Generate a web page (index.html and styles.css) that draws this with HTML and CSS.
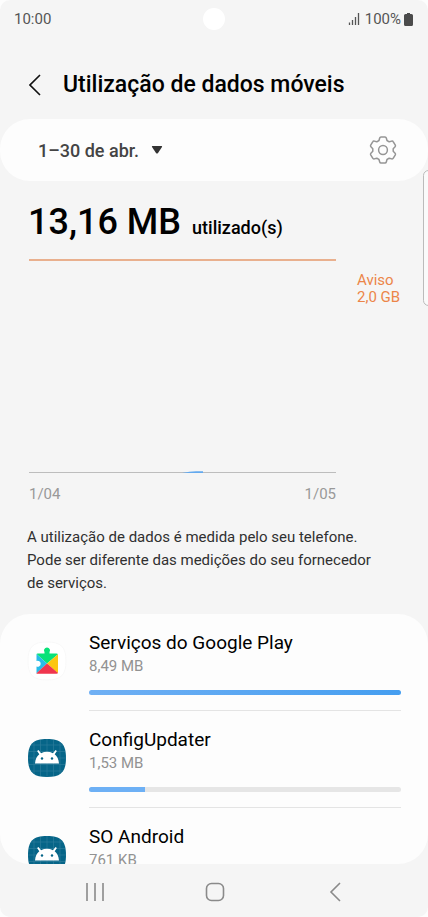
FILE: index.html
```html
<!DOCTYPE html>
<html lang="pt">
<head>
<meta charset="utf-8">
<meta name="viewport" content="width=device-width, initial-scale=1">
<title>Utilização de dados móveis</title>
<link rel="stylesheet" href="styles.css">
</head>
<body>
<svg class="defs" aria-hidden="true">
  <symbol id="android" viewBox="0 0 40 40">
    <path fill="#066588" d="M20 1C34 1 39 6 39 20S34 39 20 39 1 34 1 20 6 1 20 1Z"/>
    <path stroke="#2d7d9b" stroke-width=".7" d="M7 4v32M13.500 2v36M20 1v38M26.500 2v36M33 4v32M4 7h32M2 13.500h36M1 20h38M2 26.500h36M4 33h32"/>
    <path fill="#fff" d="M8 25.500c.3-4.300 1.800-7.300 4.300-9.300l-2.200-3.300 1.400-.9 2.500 3.200a14 14 0 0 1 12 0l2.500-3.200 1.400.9-2.200 3.300c2.500 2 4 5 4.300 9.300Z"/>
    <circle cx="15" cy="20.500" r="1.200" fill="#066588"/><circle cx="25" cy="20.500" r="1.200" fill="#066588"/>
  </symbol>
</svg>
<div class="screen">
  <div class="status">
    <span>10:00</span>
    <span class="camera"></span>
    <span class="status-right">
      <svg class="signal" viewBox="0 0 12 12"><path d="M1.500 12V9.500M4.500 12V7M7.500 12V4M10.500 12V0" stroke="#555" stroke-width="1.300"/></svg>
      <span>100%</span>
      <svg class="battery" viewBox="0 0 9 13"><path fill="#4b4b4b" d="M3 0h3v1h1.500Q9 1 9 2.500v9Q9 13 7.500 13h-6Q0 13 0 11.500v-9Q0 1 1.500 1H3Z"/></svg>
    </span>
  </div>
  <header class="header">
    <button class="icon-button" aria-label="Voltar"><svg class="back" viewBox="0 0 12 22"><path d="M11 1 1 11l10 10" fill="none" stroke="#111" stroke-width="1.600"/></svg></button>
    <h1>Utilização de dados móveis</h1>
  </header>
  <main>
    <section class="period">
      <button class="period-button">1–30 de abr.<svg class="caret" viewBox="0 0 12 8"><path d="M1.500 0h9q1 0 .5 1L7 7q-1 1-2 0L1 1Q.5 0 1.500 0Z" fill="#333"/></svg></button>
      <button class="icon-button" aria-label="Definições"><svg class="gear" viewBox="0 0 28 28" fill="none" stroke="#959595" stroke-width="1.500" stroke-linejoin="round"><path d="M12 1h4q1 0 1.300 1L18 4.500l2.200 1.300 2.600-.7q1-.2 1.500.7l2 3.400q.5.900-.2 1.600l-1.900 1.900v2.600l1.900 1.900q.7.700.2 1.600l-2 3.400q-.5.900-1.500.7l-2.600-.7L18 23.500l-.7 2.500q-.3 1-1.300 1h-4q-1 0-1.300-1l-.7-2.500-2.200-1.300-2.600.7q-1 .2-1.500-.7l-2-3.400q-.5-.9.2-1.600l1.900-1.900v-2.600l-1.900-1.900q-.7-.7-.2-1.600l2-3.400q.5-.9 1.500-.7l2.600.7L10 4.500l.7-2.500q.3-1 1.300-1Z"/><circle cx="14" cy="14" r="4.400"/></svg></button>
    </section>
    <section class="usage">
      <p class="total"><strong>13,16 MB</strong><span>utilizado(s)</span></p>
      <div class="chart">
        <div class="plot"><svg class="bump" viewBox="0 0 22 2"><path d="M0 2Q8 .3 14 .3h7V2Z" fill="#63a9ee"/></svg></div>
        <p class="warning">Aviso<br>2,0 GB</p>
        <div class="dates"><span>1/04</span><span>1/05</span></div>
      </div>
      <p class="note">A utilização de dados é medida pelo seu telefone. Pode ser diferente das medições do seu fornecedor de serviços.</p>
    </section>
    <ul class="apps">
      <li>
        <svg class="app-icon" viewBox="0 0 40 40"><path d="M20 1C34 1 39 6 39 20S34 39 20 39 1 34 1 20 6 1 20 1Z" fill="#fff" stroke="#f8f8f8"/>
          <path fill="#08e278" d="M10.500 12.500h7v-1.300a3 3 0 1 1 5 0v1.300h7q1 0 1.500.7L20 22.500 9.500 13Z"/>
          <path fill="#28bce9" d="M9.500 13 20 22.500 9.500 32.500v-7a3 3 0 1 0 0-5.500Z"/>
          <path fill="#fcc612" d="m31 13.200v19L20 22.500Z"/>
          <path fill="#f0364e" d="M20 22.500 31 32q-.5.800-1.500.8h-19q-.7 0-1-.5Z"/></svg>
        <div class="app-body"><h2>Serviços do Google Play</h2><p>8,49 MB</p><div class="bar"><div class="fill full"></div></div></div>
      </li>
      <li>
        <svg class="app-icon"><use href="#android"/></svg>
        <div class="app-body"><h2>ConfigUpdater</h2><p>1,53 MB</p><div class="bar"><div class="fill" style="width:18%"></div></div></div>
      </li>
      <li>
        <svg class="app-icon"><use href="#android"/></svg>
        <div class="app-body"><h2>SO Android</h2><p>761 KB</p><div class="bar"><div class="fill" style="width:9%"></div></div></div>
      </li>
    </ul>
  </main>
  <nav class="nav">
    <button aria-label="Recentes"><svg viewBox="0 0 20 20"><path d="M2 1v18M10 1v18M18 1v18"/></svg></button>
    <button aria-label="Início"><svg viewBox="0 0 20 20"><rect x="1.500" y="1.500" width="17" height="17" rx="5"/></svg></button>
    <button aria-label="Anterior"><svg viewBox="0 0 20 20"><path d="m15 1-9 9 9 9"/></svg></button>
  </nav>
  <span class="edge"></span>
</div>
</body>
</html>
```
FILE: styles.css
```css
* { box-sizing: border-box; }
body { margin: 0; background: #fdfdfd; font-family: Roboto, sans-serif; font-size: 15px; color: #000; }
h1, h2, p, ul { margin: 0; padding: 0; }
h1, h2 { font-weight: 400; }
ul { list-style: none; }
button { border: 0; padding: 0; background: none; font: inherit; color: inherit; }
svg { display: block; }
.defs { position: absolute; width: 0; height: 0; }
.screen { position: relative; height: 100vh; display: flex; flex-direction: column; background: #f5f5f5; border-radius: 10px; overflow: hidden; }
.status { display: grid; grid-template-columns: 1fr auto 1fr; align-items: center; height: 38px; padding: 0 15px 0 14px; color: #555; flex: none; }
.camera { width: 22px; height: 22px; border-radius: 50%; background: #fff; }
.status-right { display: flex; justify-content: flex-end; align-items: center; gap: 3px; }
.signal { width: 12px; height: 12px; margin-right: 2px; }
.battery { width: 9px; height: 13px; }
.header { display: flex; align-items: center; gap: 22px; height: 81px; padding: 12px 29px 0; flex: none; }
.back { width: 12px; height: 22px; }
h1 { font-size: 23px; font-weight: 500; white-space: nowrap; }
main { flex: 1; min-height: 0; display: flex; flex-direction: column; }
.period { display: flex; align-items: center; justify-content: space-between; height: 62px; padding: 0 31px 0 38px; background: #fdfdfd; border-radius: 30px; flex: none; }
.period-button { display: flex; align-items: center; gap: 12px; font-size: 18px; font-weight: 500; color: #444; }
.caret { width: 12px; height: 8px; }
.gear { width: 28px; height: 28px; }
.usage { padding: 19px 28px 19px; flex: none; }
.total { display: flex; align-items: baseline; gap: 11px; line-height: 44px; }
.total strong { font-size: 36px; font-weight: 500; }
.total span { font-size: 18px; font-weight: 500; }
.chart { display: grid; grid-template-columns: 1fr 43px; column-gap: 21px; padding: 9px 0 0 1px; }
.plot { height: 214px; border-top: 2px solid #e9b08e; border-bottom: 1px solid #bdbdbd; display: flex; align-items: flex-end; justify-content: center; }
.bump { width: 22px; height: 2px; margin: 0 0 -1px 20px; }
.warning { padding-top: 13px; line-height: 17px; color: #ec8549; white-space: nowrap; }
.dates { display: flex; justify-content: space-between; padding-top: 12px; line-height: 18px; color: #999; }
.note { max-width: 360px; margin: 23px 0 0 -1px; line-height: 23px; color: #303030; }
.apps { flex: 1; min-height: 0; overflow: hidden; padding: 16px 27px 0; background: #fdfdfd; border-radius: 30px; }
.apps li { display: grid; grid-template-columns: 40px 1fr; column-gap: 22px; }
.app-icon { width: 40px; height: 40px; margin-top: 11px; }
.app-body { height: 97px; }
.app-body h2 { font-size: 19px; line-height: 26px; }
.app-body p { line-height: 20px; color: #929292; }
.bar { height: 5px; margin: 14px 0 15px; border-radius: 3px; background: #e6e6e6; overflow: hidden; }
.fill { height: 100%; background: #6db0f5; }
.full { width: 100%; background: linear-gradient(90deg, #70b0f4, #459ef0); }
.app-body::after { content: ""; display: block; height: 1px; background: #e4e4e4; }
.nav { display: grid; grid-template-columns: repeat(3, 120px); justify-content: center; align-items: center; height: 53px; padding: 2px 0 0 2px; flex: none; }
.nav button { display: flex; justify-content: center; }
.nav svg { width: 20px; height: 20px; fill: none; stroke: #8a8a8a; stroke-width: 1.600; }
.edge { position: absolute; top: 170px; right: -6px; width: 11px; height: 136px; border: 1px solid #bbb; border-radius: 6px; background: #fafafa; }
```
